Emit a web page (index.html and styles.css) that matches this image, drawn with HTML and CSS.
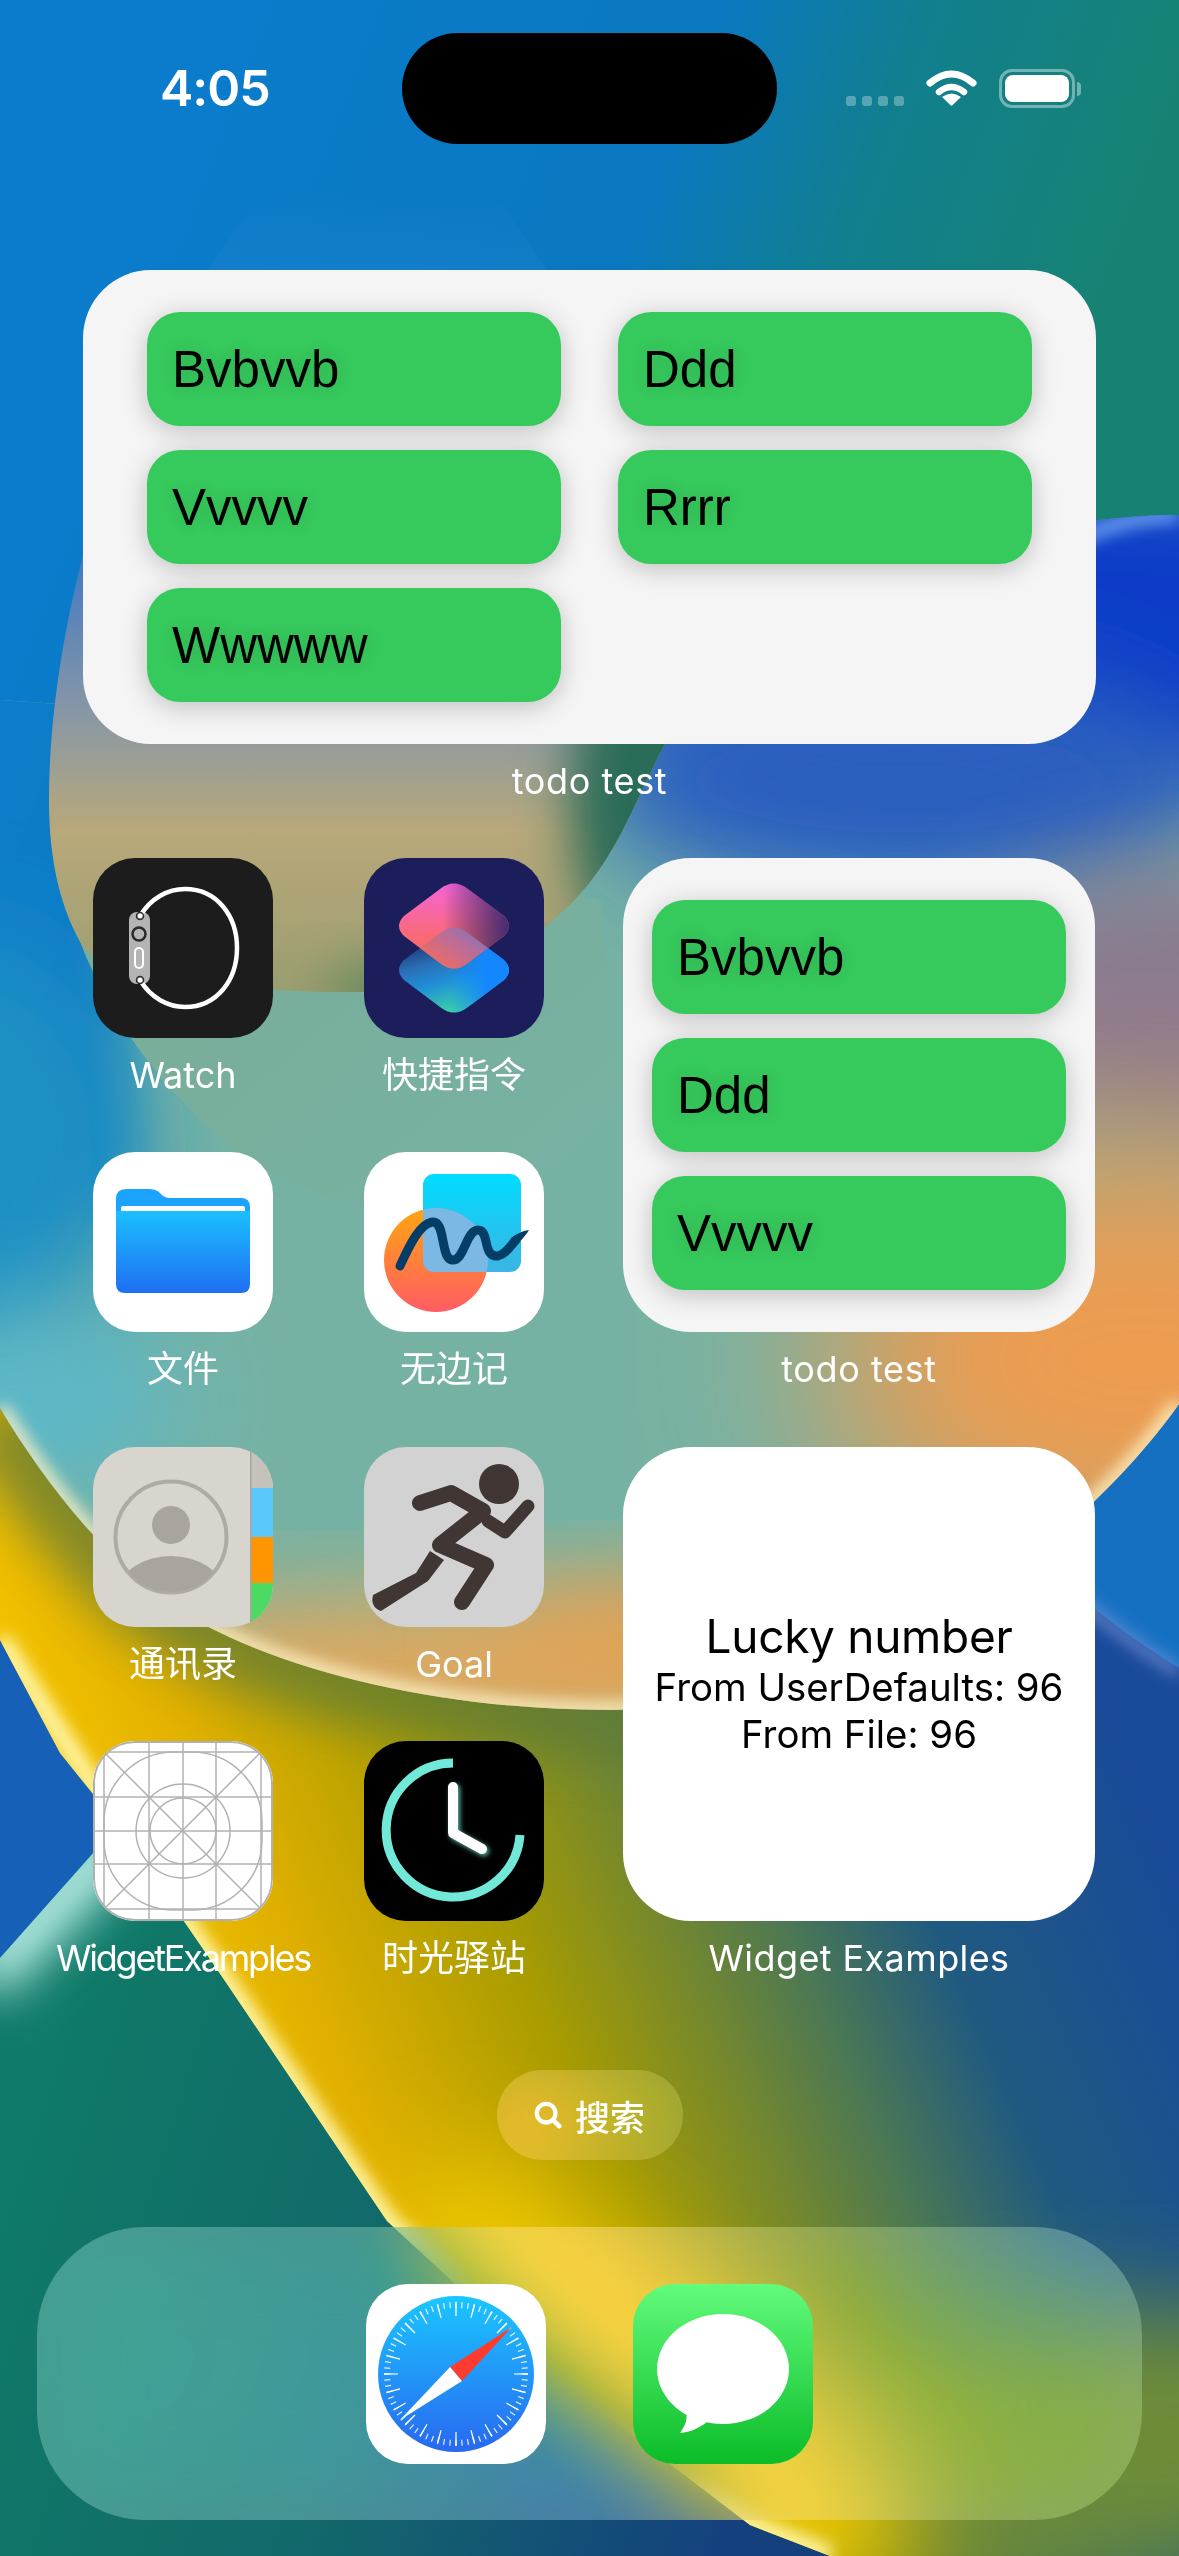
FILE: index.html
```html
<!DOCTYPE html>
<html lang="zh">
<head>
<meta charset="utf-8">
<title>Home Screen</title>
<link rel="stylesheet" href="styles.css">
</head>
<body>
<main class="screen">
  <svg class="wallpaper" viewBox="0 0 1179 2556" aria-hidden="true">
    <defs>
      <filter id="b8" x="-50%" y="-50%" width="200%" height="200%"><feGaussianBlur stdDeviation="8"/></filter>
      <filter id="b25" x="-50%" y="-50%" width="200%" height="200%"><feGaussianBlur stdDeviation="25"/></filter>
      <filter id="b50" x="-50%" y="-50%" width="200%" height="200%"><feGaussianBlur stdDeviation="50"/></filter>
      <filter id="b90" x="-50%" y="-50%" width="200%" height="200%"><feGaussianBlur stdDeviation="90"/></filter>
      <linearGradient id="wpBase" gradientUnits="userSpaceOnUse" x1="200" y1="100" x2="1050" y2="420">
        <stop offset="0" stop-color="#0a7ccb"/><stop offset=".5" stop-color="#0a78c0"/><stop offset=".72" stop-color="#117f8e"/><stop offset="1" stop-color="#178274"/>
      </linearGradient>
      <linearGradient id="wpYellow" gradientUnits="userSpaceOnUse" x1="0" y1="1850" x2="1200" y2="1325">
        <stop offset="0" stop-color="#ffd000"/><stop offset=".05" stop-color="#f5c400"/><stop offset=".17" stop-color="#e0b000"/><stop offset=".33" stop-color="#a89c00"/><stop offset=".43" stop-color="#7a8a28"/><stop offset=".53" stop-color="#4a7755"/><stop offset=".63" stop-color="#205a80"/><stop offset=".82" stop-color="#1a4a9a"/>
      </linearGradient>
      <linearGradient id="wpTeal" gradientUnits="userSpaceOnUse" x1="0" y1="2200" x2="760" y2="2450">
        <stop offset="0" stop-color="#0f7a68"/><stop offset=".5" stop-color="#12686a"/><stop offset="1" stop-color="#14407e"/>
      </linearGradient>
      <linearGradient id="wpTan" gradientUnits="userSpaceOnUse" x1="0" y1="190" x2="0" y2="990">
        <stop offset="0" stop-color="#2a86d4" stop-opacity="0"/><stop offset=".1" stop-color="#2a86d4" stop-opacity=".25"/><stop offset=".45" stop-color="#3f78c6"/><stop offset=".66" stop-color="#8a98a4"/><stop offset=".8" stop-color="#b8a87a"/><stop offset="1" stop-color="#9c9e70"/>
      </linearGradient>
      <linearGradient id="wpLens" gradientUnits="userSpaceOnUse" x1="200" y1="1020" x2="430" y2="1290">
        <stop offset="0" stop-color="#78ae9a"/><stop offset=".6" stop-color="#78b0a0"/><stop offset="1" stop-color="#78b0a0" stop-opacity="0"/>
      </linearGradient>
      <clipPath id="clipB"><path d="M0 700 L660 745 C780 640 950 515 1179 515 L1179 1404 C1090 1530 880 1710 610 1710 C400 1710 180 1650 98 1540 C60 1500 25 1450 0 1408 Z"/></clipPath>
      <clipPath id="clipTan"><path d="M270 190 C120 350 49 620 49 800 C49 860 60 910 85 950 C170 985 270 993 360 992 C440 990 520 960 580 894 C620 850 640 790 665 744 C700 680 720 600 700 500 L500 200 Z"/></clipPath>
      <clipPath id="clipYellow"><path d="M0 1640 L60 1753 L118 1825 L225 1981 L387 2221 L560 2380 L750 2525 L830 2556 L1179 2556 L1179 1300 L0 1300 Z"/></clipPath>
      <clipPath id="clipTeal"><path d="M0 1958 L118 1825 L225 1981 L387 2221 L560 2380 L750 2525 L830 2556 L0 2556 Z"/></clipPath>
      <clipPath id="clipCorner"><path d="M1179 1668 C1150 1650 1110 1625 1050 1570 L1000 1300 L1179 1300 Z"/></clipPath>
    </defs>
    <rect width="1179" height="2556" fill="url(#wpBase)"/>
    <path d="M0 1640 L118 1825 L0 1958 Z" fill="#1660b8"/>
    <g clip-path="url(#clipTeal)">
      <rect y="1800" width="900" height="760" fill="url(#wpTeal)"/>
      <path d="M-20 1978 L130 1825" stroke="#c8f8f2" stroke-width="56" filter="url(#b25)" fill="none"/>
    </g>
    <g clip-path="url(#clipYellow)">
      <rect y="1300" width="1179" height="1256" fill="url(#wpYellow)"/>
      <ellipse cx="1120" cy="2440" rx="340" ry="130" fill="#6e8c38" filter="url(#b50)"/>
      <path d="M420 2210 L880 2560" stroke="#eec800" stroke-width="170" filter="url(#b50)" fill="none"/>
      <path d="M1179 1404 C1090 1530 880 1710 610 1710 C400 1710 180 1650 98 1540 C60 1500 25 1450 0 1408" stroke="#5f7a38" stroke-width="90" filter="url(#b25)" fill="none" opacity=".75"/>
      <path d="M0 1640 L118 1825 L225 1981 L387 2221 L560 2380 L750 2525 L830 2556" stroke="#fff6a8" stroke-width="20" filter="url(#b8)" fill="none"/>
    </g>
    <g clip-path="url(#clipCorner)">
      <rect x="1000" y="1300" width="179" height="400" fill="#1670c2"/>
    </g>
    <path d="M1179 1672 C1150 1654 1110 1629 1050 1574" stroke="#7f9be0" stroke-width="8" filter="url(#b8)" fill="none"/>
    <g clip-path="url(#clipB)">
      <rect y="500" width="1179" height="1250" fill="#76b2a4"/>
      <rect x="-200" y="300" width="320" height="900" fill="url(#wpBase)" filter="url(#b25)"/>
      <ellipse cx="-60" cy="1150" rx="200" ry="220" fill="#1c90c4" filter="url(#b50)"/>
      <ellipse cx="30" cy="1400" rx="150" ry="90" fill="#5cb8c8" filter="url(#b50)"/>
      <ellipse cx="1050" cy="620" rx="520" ry="170" fill="#083ec8" filter="url(#b50)"/>
      <ellipse cx="900" cy="780" rx="310" ry="120" fill="#2a5ec0" filter="url(#b50)"/>
      <ellipse cx="1180" cy="1000" rx="220" ry="140" fill="#8a7a90" filter="url(#b50)"/>
      <ellipse cx="1140" cy="1360" rx="320" ry="220" fill="#ee9c50" filter="url(#b90)"/>
      <ellipse cx="420" cy="1670" rx="360" ry="70" fill="#e8a858" filter="url(#b50)"/>
      <ellipse cx="800" cy="1640" rx="320" ry="60" fill="#e8a050" filter="url(#b50)"/>
      <path d="M1179 1404 C1090 1530 880 1710 610 1710 C400 1710 180 1650 98 1540 C60 1500 25 1450 0 1408" stroke="#fff3c4" stroke-width="14" filter="url(#b8)" fill="none"/>
      <path d="M1000 590 C1060 540 1120 515 1179 515" stroke="#6ea4f4" stroke-width="14" filter="url(#b8)" fill="none"/>
    </g>
    <path d="M49 800 C60 950 130 1060 227 1144 C320 1215 480 1240 640 1270 L600 900 Z" fill="url(#wpLens)"/>
    <g clip-path="url(#clipTan)">
      <rect y="190" width="760" height="810" fill="url(#wpTan)"/>
      <ellipse cx="660" cy="800" rx="90" ry="170" fill="#2c6c58" filter="url(#b25)"/>
      <ellipse cx="520" cy="990" rx="200" ry="34" fill="#5c8458" filter="url(#b25)"/>
    </g>
  </svg>

  <header class="status">
    <span class="time">4:05</span>
    <div class="island"></div>
    <div class="indicators">
      <div class="signal"><i></i><i></i><i></i><i></i></div>
      <svg class="wifi" viewBox="0 0 51 37"><path d="M4 14 Q25.500 -4 47 14" fill="none" stroke="#fff" stroke-width="7" stroke-linecap="round"/><path d="M13 23 Q25.500 13 38 23" fill="none" stroke="#fff" stroke-width="6.500" stroke-linecap="round"/><path d="M25.500 37 L16 28 Q25.500 21 35 28 Z" fill="#fff"/></svg>
      <div class="battery"><div class="battery-fill"></div></div>
      <div class="battery-cap"></div>
    </div>
  </header>

  <section class="widget-block wide">
    <div class="widget todo todo-wide">
      <div class="todo-item">Bvbvvb</div>
      <div class="todo-item">Ddd</div>
      <div class="todo-item">Vvvvv</div>
      <div class="todo-item">Rrrr</div>
      <div class="todo-item">Wwwww</div>
    </div>
    <p class="label label-todo">todo test</p>
  </section>

  <section class="home-grid">
    <div class="app">
      <div class="icon">
        <svg viewBox="0 0 180 180"><rect width="180" height="180" fill="#1c1c1c"/><rect x="36" y="54" width="21" height="72" rx="8" fill="#b4b4b4"/><circle cx="46" cy="76" r="6.500" fill="none" stroke="#2a2a2a" stroke-width="2.500"/><rect x="42" y="90" width="8" height="20" rx="4" fill="none" stroke="#fff" stroke-width="2"/><path d="M47 58 C58 40 75 31 92 31 C124 31 144 58 144 90 C144 122 124 149 92 149 C75 149 58 140 47 122" fill="none" stroke="#fff" stroke-width="4.500" stroke-linecap="round"/><circle cx="47" cy="58" r="3.500" fill="none" stroke="#2a2a2a" stroke-width="1.500"/><circle cx="47" cy="122" r="3.500" fill="none" stroke="#2a2a2a" stroke-width="1.500"/></svg>
      </div>
      <p class="label">Watch</p>
    </div>
    <div class="app">
      <div class="icon">
        <svg viewBox="0 0 180 180">
          <defs>
            <linearGradient id="scLow" x1=".2" y1=".1" x2=".55" y2="1"><stop offset="0" stop-color="#1c2a68"/><stop offset=".35" stop-color="#2a70b8"/><stop offset=".6" stop-color="#1f90d8"/><stop offset="1" stop-color="#3ed8a0"/></linearGradient>
            <linearGradient id="scLowR" x1="0" y1="0" x2="1" y2="0"><stop offset=".45" stop-color="#1487ff" stop-opacity="0"/><stop offset=".8" stop-color="#1487ff"/></linearGradient>
            <linearGradient id="scTop" x1=".5" y1="0" x2=".5" y2="1"><stop offset="0" stop-color="#f664d8"/><stop offset=".6" stop-color="#f96a78"/><stop offset="1" stop-color="#f26a5c"/></linearGradient>
            <linearGradient id="scTopR" x1="0" y1="0" x2="1" y2="0"><stop offset=".4" stop-color="#1c1e5c" stop-opacity="0"/><stop offset="1" stop-color="#3c2870" stop-opacity=".95"/></linearGradient>
            <linearGradient id="scOverlap" x1=".35" y1="1" x2=".85" y2=".45"><stop offset="0" stop-color="#f26a62"/><stop offset=".55" stop-color="#b06ea0"/><stop offset="1" stop-color="#4a78d0"/></linearGradient>
            <clipPath id="scClip"><path d="M76 75 Q90 64 104 75 L140 102 Q150 112 140 122 L104 149 Q90 160 76 149 L40 122 Q30 112 40 102 Z"/></clipPath>
          </defs>
          <rect width="180" height="180" fill="#1c1e5c"/>
          <path d="M76 75 Q90 64 104 75 L140 102 Q150 112 140 122 L104 149 Q90 160 76 149 L40 122 Q30 112 40 102 Z" fill="url(#scLow)"/>
          <path d="M76 75 Q90 64 104 75 L140 102 Q150 112 140 122 L104 149 Q90 160 76 149 L40 122 Q30 112 40 102 Z" fill="url(#scLowR)"/>
          <path d="M76 31 Q90 20 104 31 L140 58 Q150 68 140 78 L104 105 Q90 116 76 105 L40 78 Q30 68 40 58 Z" fill="url(#scTop)"/>
          <path d="M76 31 Q90 20 104 31 L140 58 Q150 68 140 78 L104 105 Q90 116 76 105 L40 78 Q30 68 40 58 Z" fill="url(#scTopR)"/>
          <g clip-path="url(#scClip)"><path d="M76 31 Q90 20 104 31 L140 58 Q150 68 140 78 L104 105 Q90 116 76 105 L40 78 Q30 68 40 58 Z" fill="url(#scOverlap)"/></g>
        </svg>
      </div>
      <p class="label">快捷指令</p>
    </div>
    <div class="widget-block tall">
      <div class="widget todo">
        <div class="todo-item">Bvbvvb</div>
        <div class="todo-item">Ddd</div>
        <div class="todo-item">Vvvvv</div>
      </div>
      <p class="label label-todo">todo test</p>
    </div>
    <div class="app">
      <div class="icon">
        <svg viewBox="0 0 180 180">
          <defs>
            <linearGradient id="fileFront" x1="0" y1="0" x2="0" y2="1"><stop offset="0" stop-color="#1bbfff"/><stop offset="1" stop-color="#1e6ff2"/></linearGradient>
          </defs>
          <rect width="180" height="180" fill="#fff"/>
          <path d="M23 47 Q23 37 33 37 L56 37 Q63 37 67 41 Q71 46 77 46 L148 46 Q157 46 157 55 L157 80 L23 80 Z" fill="#1aa4ff"/>
          <rect x="28" y="54" width="124" height="8" rx="2" fill="#fff"/>
          <path d="M23 59 L157 59 L157 132 Q157 141 148 141 L32 141 Q23 141 23 132 Z" fill="url(#fileFront)"/>
        </svg>
      </div>
      <p class="label">文件</p>
    </div>
    <div class="app">
      <div class="icon">
        <svg viewBox="0 0 180 180">
          <defs>
            <linearGradient id="ffCircle" x1="0" y1="0" x2="0" y2="1"><stop offset="0" stop-color="#ffa60f"/><stop offset="1" stop-color="#ff5c64"/></linearGradient>
            <linearGradient id="ffSquare" x1="0" y1="0" x2="0" y2="1"><stop offset="0" stop-color="#00dcff"/><stop offset="1" stop-color="#3cb4e4"/></linearGradient>
            <clipPath id="ffClip"><circle cx="72" cy="108" r="52"/></clipPath>
          </defs>
          <rect width="180" height="180" fill="#fff"/>
          <circle cx="72" cy="108" r="52" fill="url(#ffCircle)"/>
          <rect x="59" y="22" width="98" height="98" rx="11" fill="url(#ffSquare)"/>
          <g clip-path="url(#ffClip)"><rect x="59" y="22" width="98" height="98" rx="11" fill="#7cb8e4"/></g>
          <path d="M36 114 C46 92 56 72 68 70 C82 68 76 106 88 108 C100 110 102 78 114 78 C126 78 118 106 134 104 C142 102 146 94 152 88" fill="none" stroke="#043d66" stroke-width="9" stroke-linecap="round" stroke-linejoin="round"/>
          <path d="M147 86 C152 82 158 79 165 78 C160 86 154 92 150 94 Z" fill="#043d66"/>
        </svg>
      </div>
      <p class="label">无边记</p>
    </div>
    <div class="app">
      <div class="icon">
        <svg viewBox="0 0 180 180">
          <defs><clipPath id="ctClip"><circle cx="78" cy="90" r="55"/></clipPath></defs>
          <rect width="180" height="180" fill="#d8d5cf"/>
          <rect x="158" width="22" height="41" fill="#c5c2bc"/>
          <rect x="158" y="41" width="22" height="49" fill="#5ac8fa"/>
          <rect x="158" y="90" width="22" height="46" fill="#ff9500"/>
          <rect x="158" y="136" width="22" height="44" fill="#4cd964"/>
          <rect x="157" width="1.500" height="180" fill="#a8a59f"/>
          <circle cx="78" cy="90" r="55.500" fill="none" stroke="#b0aaa4" stroke-width="4"/>
          <circle cx="78" cy="78" r="19" fill="#aaa49e"/>
          <g clip-path="url(#ctClip)"><ellipse cx="78" cy="145" rx="52" ry="36" fill="#aaa49e"/></g>
        </svg>
      </div>
      <p class="label">通讯录</p>
    </div>
    <div class="app">
      <div class="icon">
        <svg viewBox="0 0 180 180">
          <rect width="180" height="180" fill="#d2d2d2"/>
          <circle cx="135" cy="37" r="20" fill="#403734"/>
          <g fill="none" stroke="#403734" stroke-width="16" stroke-linecap="round" stroke-linejoin="round">
            <path d="M56 56 L87 46 L119 64 L76 98 L122 118 L98 155"/>
            <path d="M124 74 L141 85 L164 59" stroke-width="13"/>
          </g>
          <path d="M66 104 L80 113 L64 134 L17 164 Q6 160 9 148 L52 126 Z" fill="#403734"/>
        </svg>
      </div>
      <p class="label">Goal</p>
    </div>
    <div class="widget-block tall">
      <div class="widget lucky">
        <p class="lucky-title">Lucky number</p>
        <p class="lucky-line">From UserDefaults: 96</p>
        <p class="lucky-line">From File: 96</p>
      </div>
      <p class="label label-wide">Widget Examples</p>
    </div>
    <div class="app">
      <div class="icon icon-grid">
        <svg viewBox="0 0 180 180">
          <rect width="180" height="180" fill="#fff"/>
          <g fill="none" stroke="#b2b2b2" stroke-width="1.500">
            <path d="M56 0V180M90 0V180M123 0V180M11 0V180M168 0V180M0 11H180M0 56H180M0 90H180M0 123H180M0 168H180M11 11L168 168M168 11L11 168"/>
            <rect x="11" y="11" width="158" height="158" rx="70"/>
            <circle cx="90" cy="90" r="47"/>
            <circle cx="90" cy="90" r="33"/>
          </g>
        </svg>
      </div>
      <p class="label label-tight">WidgetExamples</p>
    </div>
    <div class="app">
      <div class="icon">
        <svg viewBox="0 0 180 180">
          <defs><filter id="ckGlow" x="-40%" y="-40%" width="180%" height="180%"><feDropShadow dx="2" dy="2" stdDeviation="2.500" flood-color="#72e8d8" flood-opacity=".8"/></filter></defs>
          <rect width="180" height="180" fill="#000"/>
          <path d="M89 22 A67 67 0 1 0 156 94" fill="none" stroke="#72e8d8" stroke-width="9"/>
          <path d="M89 46 V92 L118 108" fill="none" stroke="#fff" stroke-width="10" stroke-linecap="round" stroke-linejoin="round" filter="url(#ckGlow)"/>
        </svg>
      </div>
      <p class="label">时光驿站</p>
    </div>
  </section>

  <div class="search">
    <svg class="search-icon" viewBox="0 0 30 30"><circle cx="13" cy="13" r="10" fill="none" stroke="#fff" stroke-width="4.500"/><path d="M20.500 20.500 L27 27" stroke="#fff" stroke-width="5" stroke-linecap="round"/></svg>
    <span>搜索</span>
  </div>

  <nav class="dock">
    <div class="icon">
      <svg viewBox="0 0 180 180">
        <defs><linearGradient id="sfBlue" x1="0" y1="0" x2="0" y2="1"><stop offset="0" stop-color="#1bc6ff"/><stop offset="1" stop-color="#2868f0"/></linearGradient></defs>
        <rect width="180" height="180" fill="#fff"/>
        <circle cx="90" cy="90" r="78" fill="url(#sfBlue)"/>
        <circle cx="90" cy="90" r="69" fill="none" stroke="#fff" stroke-width="6" pathLength="360" stroke-dasharray="1 4" stroke-dashoffset=".5" opacity=".85"/>
        <circle cx="90" cy="90" r="65" fill="none" stroke="#fff" stroke-width="14" pathLength="360" stroke-dasharray="1.200 13.800" stroke-dashoffset=".6"/>
        <path d="M146 43 L84 83 L96 97 Z" fill="#ff3b30"/>
        <path d="M34 136 L84 83 L96 97 Z" fill="#fff"/>
      </svg>
    </div>
    <div class="icon">
      <svg viewBox="0 0 180 180">
        <defs><linearGradient id="msGreen" x1="0" y1="0" x2="0" y2="1"><stop offset="0" stop-color="#62fb7c"/><stop offset="1" stop-color="#0bbc28"/></linearGradient></defs>
        <rect width="180" height="180" fill="url(#msGreen)"/>
        <ellipse cx="90" cy="85" rx="66" ry="55" fill="#fff"/>
        <path d="M52 124 C56 134 52 142 47 149 C58 148 66 144 74 138 Z" fill="#fff"/>
      </svg>
    </div>
  </nav>
</main>
</body>
</html>
```

FILE: styles.css
```css
* { box-sizing: border-box; }

html, body {
  margin: 0;
  padding: 0;
}

body {
  font-family: "Inter", "Noto Sans CJK SC", sans-serif;
  color: #000;
  background: #0a7ccb;
}

p { margin: 0; }

.screen {
  position: relative;
  width: 1179px;
  height: 2556px;
  overflow: hidden;
  padding-top: 33px;
}

.wallpaper {
  position: absolute;
  inset: 0;
  width: 1179px;
  height: 2556px;
}

.status {
  position: relative;
  display: flex;
  align-items: center;
  height: 111px;
  padding-left: 160px;
}

.time {
  width: 242px;
  color: #fff;
  font-size: 50px;
  font-weight: 600;
  line-height: 60px;
  letter-spacing: -1px;
  margin-top: -2px;
}

.island {
  width: 375px;
  height: 111px;
  border-radius: 56px;
  background: #000;
}

.indicators {
  display: flex;
  align-items: center;
  margin-left: 69px;
  height: 111px;
}

.signal {
  display: flex;
  gap: 6px;
  margin-top: 24px;
}

.signal i {
  width: 10px;
  height: 10px;
  border-radius: 3px;
  background: rgba(255, 255, 255, .3);
}

.wifi {
  width: 51px;
  height: 37px;
  margin-left: 22px;
  margin-top: -2px;
}

.battery {
  width: 76px;
  height: 39px;
  margin-left: 22px;
  margin-top: -1px;
  padding: 3px;
  border: 3px solid rgba(255, 255, 255, .4);
  border-radius: 13px;
}

.battery-fill {
  width: 100%;
  height: 100%;
  border-radius: 8px;
  background: #fff;
}

.battery-cap {
  width: 4px;
  height: 14px;
  margin-left: 2px;
  border-radius: 0 6px 6px 0;
  background: rgba(255, 255, 255, .4);
}

.widget-block {
  position: relative;
}

.widget-block.wide {
  width: 1013px;
  margin: 126px 0 0 83px;
}

.widget-block.tall {
  grid-row: span 2;
  width: 472px;
}

.widget {
  height: 474px;
  border-radius: 68px;
}

.todo {
  display: flex;
  flex-direction: column;
  gap: 24px;
  padding: 42px 29px;
  background: #f5f5f5;
}

.todo-wide {
  display: grid;
  grid-template-columns: 414px 414px;
  grid-auto-rows: 114px;
  column-gap: 57px;
  padding: 42px 64px;
}

.todo-item {
  display: flex;
  align-items: center;
  height: 114px;
  padding: 2px 0 0 25px;
  border-radius: 33px;
  background: #36c95c;
  box-shadow: 0 5px 26px rgba(0, 0, 0, .22);
  font-family: "Liberation Sans", Arial, sans-serif;
  font-size: 51px;
  line-height: 60px;
  text-shadow: 0 0 18px rgba(0, 0, 0, .14);
}

.label {
  margin-top: 15px;
  color: #fff;
  font-size: 36px;
  line-height: 44px;
  text-align: center;
  white-space: nowrap;
}

.label-todo {
  letter-spacing: .6px;
}

.label-tight {
  letter-spacing: -2.2px;
  margin-left: -40px;
  margin-right: -40px;
}

.label-wide {
  letter-spacing: .4px;
}

.home-grid {
  position: relative;
  display: grid;
  grid-template-columns: 180px 180px 472px;
  grid-auto-rows: 294.3px;
  column-gap: 91px;
  margin-top: 55px;
  padding-left: 93px;
}

.home-grid .widget-block {
  margin-left: -12px;
}

.icon {
  width: 180px;
  height: 180px;
  border-radius: 42px;
  overflow: hidden;
}

.icon svg {
  display: block;
  width: 180px;
  height: 180px;
}

.icon-grid {
  position: relative;
}

.icon-grid::after {
  content: "";
  position: absolute;
  inset: 0;
  border: 2px solid #b0b0b0;
  border-radius: 42px;
}

.lucky {
  display: flex;
  flex-direction: column;
  align-items: center;
  justify-content: center;
  padding-bottom: 2px;
  background: #fff;
  text-align: center;
}

.lucky-title {
  font-size: 46px;
  line-height: 56px;
  letter-spacing: -.3px;
}

.lucky-line {
  font-size: 38.4px;
  line-height: 47px;
  white-space: nowrap;
}

.search {
  position: relative;
  display: flex;
  align-items: center;
  justify-content: center;
  gap: 13px;
  width: 186px;
  height: 90px;
  margin: 35px auto 0;
  border-radius: 45px;
  background: rgba(255, 255, 255, .16);
  -webkit-backdrop-filter: blur(30px) saturate(2.4);
  backdrop-filter: blur(30px) saturate(2.4);
  color: #fff;
  font-size: 35px;
  font-weight: 500;
}

.search-icon {
  width: 28px;
  height: 28px;
}

.dock {
  position: relative;
  display: flex;
  justify-content: center;
  gap: 87px;
  width: 1105px;
  height: 293px;
  margin: 67px 0 0 37px;
  padding-top: 57px;
  border-radius: 108px;
  background: rgba(255, 255, 255, .25);
  -webkit-backdrop-filter: blur(50px) saturate(1.7);
  backdrop-filter: blur(50px) saturate(1.7);
}
```
